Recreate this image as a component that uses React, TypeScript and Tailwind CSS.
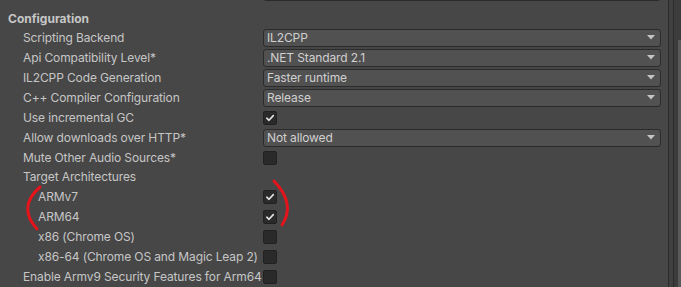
import type { ReactNode } from 'react';

type Row =
  | { kind: 'dropdown'; label: string; value: string; indent?: number }
  | { kind: 'check'; label: string; checked: boolean; indent?: number }
  | { kind: 'label'; label: string; indent?: number };

const rows: Row[] = [
  { kind: 'dropdown', label: 'Scripting Backend', value: 'IL2CPP' },
  { kind: 'dropdown', label: 'Api Compatibility Level*', value: '.NET Standard 2.1' },
  { kind: 'dropdown', label: 'IL2CPP Code Generation', value: 'Faster runtime' },
  { kind: 'dropdown', label: 'C++ Compiler Configuration', value: 'Release' },
  { kind: 'check', label: 'Use incremental GC', checked: true },
  { kind: 'dropdown', label: 'Allow downloads over HTTP*', value: 'Not allowed' },
  { kind: 'check', label: 'Mute Other Audio Sources*', checked: false },
  { kind: 'label', label: 'Target Architectures' },
  { kind: 'check', label: 'ARMv7', checked: true, indent: 1 },
  { kind: 'check', label: 'ARM64', checked: true, indent: 1 },
  { kind: 'check', label: 'x86 (Chrome OS)', checked: false, indent: 1 },
  { kind: 'check', label: 'x86-64 (Chrome OS and Magic Leap 2)', checked: false, indent: 1 },
  { kind: 'check', label: 'Enable Armv9 Security Features for Arm64', checked: false },
];

function Dropdown({ value }: { value: string }) {
  return (
    <div className="flex h-[18px] flex-1 items-center justify-between rounded-[3px] border border-[#2b2b2b] bg-[#515151] pl-[3px] pr-[5px] text-[#d0d0d0]">
      <span className="leading-none">{value}</span>
      <svg width="8" height="5" viewBox="0 0 8 5">
        <path d="M0 0 H8 L4 4.5 Z" fill="#c4c4c4" />
      </svg>
    </div>
  );
}

function Checkbox({ checked }: { checked: boolean }) {
  return (
    <div className="flex h-[14px] w-[14px] items-center justify-center rounded-[2px] border border-[#212121] bg-[#2a2a2a]">
      {checked && (
        <svg width="10" height="10" viewBox="0 0 10 10">
          <path d="M1.8 5.2 L4 7.3 L8.3 2.6" fill="none" stroke="#e4e4e4" strokeWidth="1.6" strokeLinecap="round" strokeLinejoin="round" />
        </svg>
      )}
    </div>
  );
}

function FieldRow({ row }: { row: Row }) {
  let value: ReactNode = null;
  if (row.kind === 'dropdown') value = <Dropdown value={row.value} />;
  if (row.kind === 'check') value = <Checkbox checked={row.checked} />;
  return (
    <div className="flex h-[20px] items-center">
      <div className={`w-[263px] shrink-0 whitespace-nowrap ${row.indent ? 'pl-[38px]' : 'pl-[23px]'}`}>{row.label}</div>
      <div className="flex flex-1 items-center">{value}</div>
    </div>
  );
}

export default function App() {
  return (
    <div className="relative flex h-[287px] w-[681px] overflow-hidden bg-[#474747] text-[12px] tracking-[-0.12px] text-[#c6c6c6]" style={{ fontFamily: 'Inter, "Noto Sans", sans-serif' }}>
      <div className="flex w-[668px] flex-col pr-[7px]">
        <div className="-mt-[18px] flex h-[20px] items-start">
          <div className="w-[263px] shrink-0" />
          <div className="h-[19px] flex-1 rounded-[3px] border border-[#2b2b2b] bg-[#515151]" />
        </div>
        <div className="h-[9px]" />
        <div className="flex h-[17px] items-center pl-[8px] font-bold tracking-normal">Configuration</div>
        {rows.map((r) => (
          <FieldRow key={r.label} row={r} />
        ))}
      </div>
      <div className="w-[1px] bg-[#2c2c2c]" />
      <div className="w-[4px] bg-[#404040]" />
      <div className="w-[1px] bg-[#2c2c2c]" />
      <div className="flex w-[7px] flex-col bg-[#3c3c3c] pt-[40px] pl-[4px]">
        <div className="flex-1 bg-[#5a5a5a]" />
      </div>
      <svg className="pointer-events-none absolute left-0 top-0" width="681" height="287">
        <path d="M40 187 Q17 207 37 229" fill="none" stroke="#e3141c" strokeWidth="3" strokeLinecap="round" />
        <path d="M274 181 Q296 204 282 225" fill="none" stroke="#e3141c" strokeWidth="3" strokeLinecap="round" />
      </svg>
    </div>
  );
}
